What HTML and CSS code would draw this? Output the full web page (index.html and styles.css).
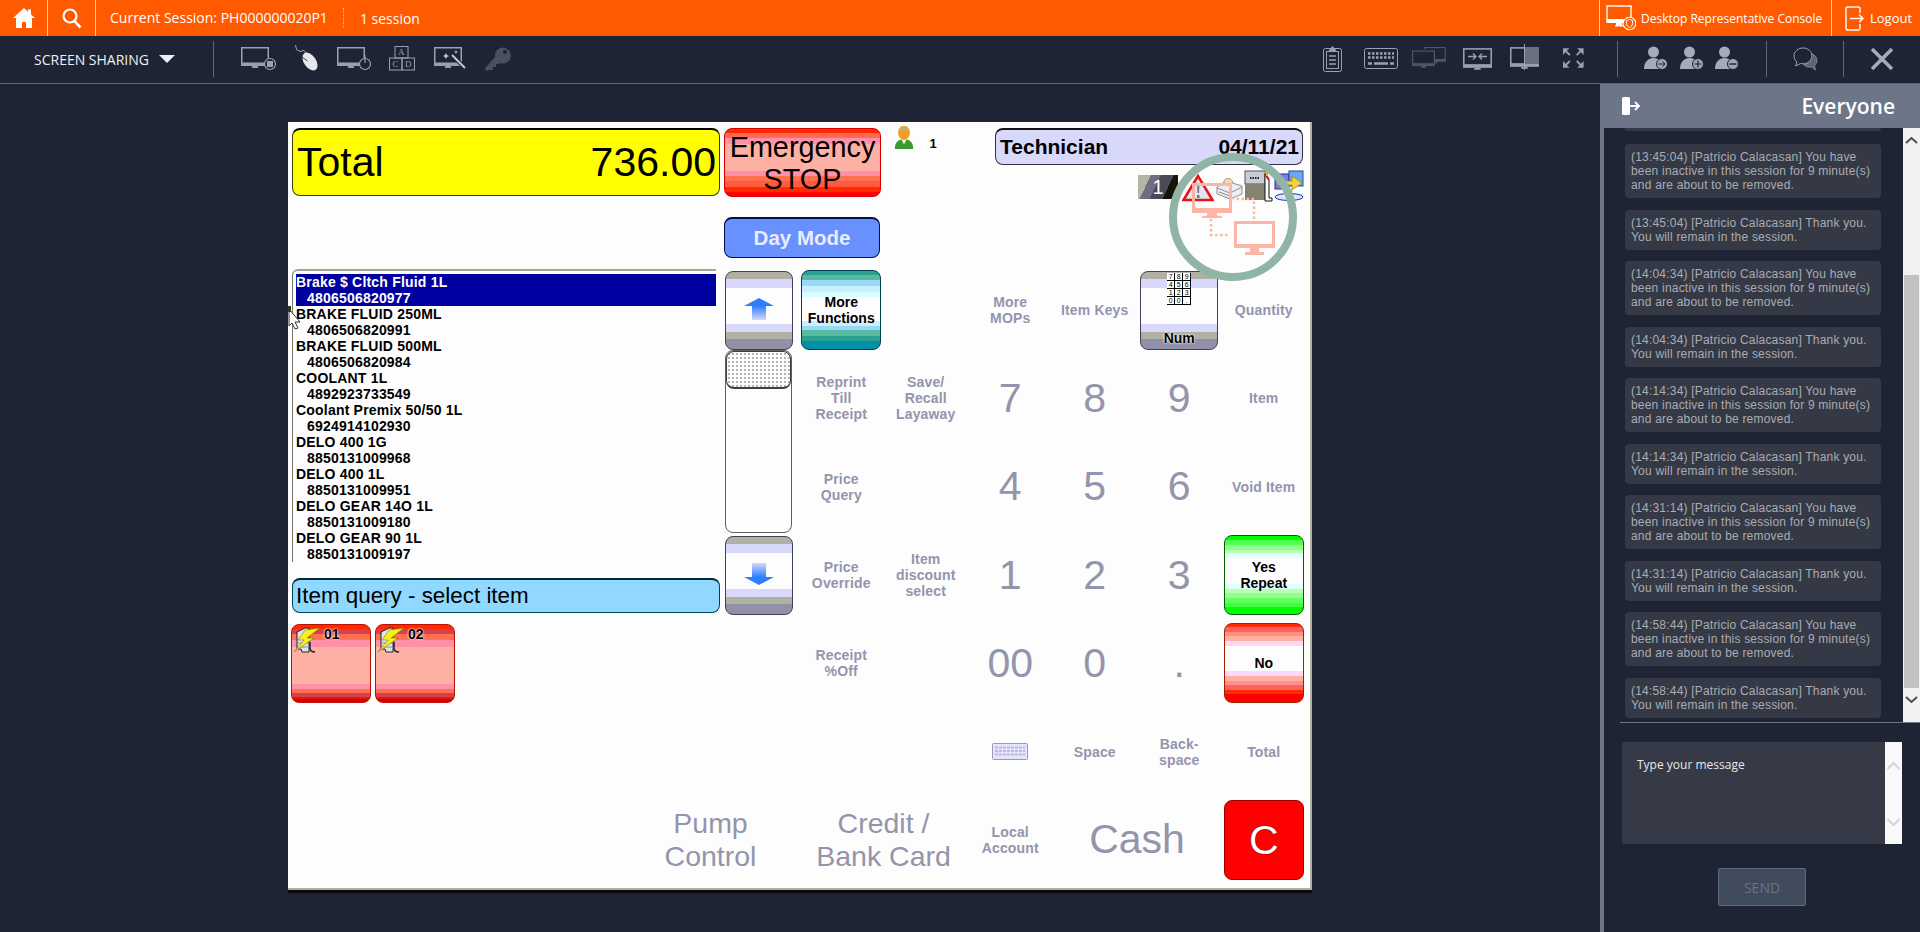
FILE: index.html
```html
<!DOCTYPE html>
<html lang="en">

<head>
  <meta charset="UTF-8" />
  <title>Desktop Representative Console</title>
  <link rel="stylesheet" href="styles.css">
</head>

<body>
  <svg class="defs" width="0" height="0">
    <defs>
      <symbol id="monitor" viewBox="0 0 28 22">
        <rect x="0.75" y="0.75" width="26.5" height="17" fill="none" stroke="currentColor" stroke-width="1.5" />
        <rect x="0" y="15.5" width="28" height="3.5" fill="currentColor" />
        <path d="M11.5 19h5l1 2h-7z" fill="currentColor" />
      </symbol>
      <symbol id="pump" viewBox="0 0 27 27">
        <path d="M4 6 12 2h4v24H9l-1-3H4z" fill="#dfe3ee" stroke="#222" />
        <path d="M4 17h12M4 21h12" stroke="#8a8fa3" />
        <path d="M22 26c-3 0-5-1-5-4v-6" fill="none" stroke="#222" stroke-width="1.500" />
        <path d="M27 2 12 4 5 14h6L1 26l20-14h-7z" fill="#f7ee20" stroke="#6a6400" stroke-width="0.500" />
      </symbol>
      <linearGradient id="shaftUp" x1="0" y1="0" x2="0" y2="1">
        <stop offset="0" stop-color="#2f7dff" />
        <stop offset="1" stop-color="#d8d8fa" />
      </linearGradient>
      <linearGradient id="shaftDown" x1="0" y1="1" x2="0" y2="0">
        <stop offset="0" stop-color="#2f7dff" />
        <stop offset="1" stop-color="#d8d8fa" />
      </linearGradient>
    </defs>
  </svg>

  <header class="topbar">
    <a class="top-btn home">
      <svg width="22" height="20" viewBox="0 0 22 20"><path d="M11 0 0 10h3v10h6v-6h4v6h6V10h3l-4-3.6V1.5h-3v2.2z" fill="#fff" /></svg>
    </a>
    <a class="top-btn search">
      <svg width="20" height="21" viewBox="0 0 20 21"><circle cx="8" cy="8" r="6.5" fill="none" stroke="#fff" stroke-width="2.2" /><path d="m12.5 13 6 6.5" stroke="#fff" stroke-width="2.6" /></svg>
    </a>
    <span class="session">Current Session: PH000000020P1</span>
    <span class="session-count">1 session</span>
    <a class="top-link console">
      <svg width="30" height="26" viewBox="0 0 30 26"><rect x="1" y="1" width="24" height="15" fill="none" stroke="#fff" stroke-width="1.4" /><rect x="0.5" y="14" width="25" height="4" fill="#fff" /><path d="M10 18h6v2h2v1.5h-9V20h1z" fill="#fff" /><circle cx="23.5" cy="18.5" r="6.2" fill="#ff5a00" stroke="#fff" stroke-width="1.1" /><path d="M23.5 14.5l3 1v3c0 2-1.4 3.3-3 4-1.6-.7-3-2-3-4v-3z" fill="none" stroke="#fff" stroke-width="1" /></svg>
      Desktop Representative Console
    </a>
    <a class="top-link logout">
      <svg width="19" height="25" viewBox="0 0 19 25"><path d="M15 7V2.5A1.5 1.5 0 0 0 13.500 1h-11A1.500 1.500 0 0 0 1 2.500v20A1.500 1.500 0 0 0 2.500 24h11a1.500 1.500 0 0 0 1.500-1.500V18" fill="none" stroke="#fff" stroke-width="1.4" /><path d="M5 12.500h13M14 8.500l4 4-4 4" fill="none" stroke="#fff" stroke-width="1.4" /></svg>
      Logout
    </a>
  </header>

  <nav class="toolbar">
    <div class="share-menu">SCREEN SHARING <span class="caret"></span></div>
    <div class="tool-group left-tools">
      <svg class="t54" height="36" viewBox="0 0 54 36"><use href="#monitor" x="0" y="6" width="28" height="22" /><circle cx="29" cy="23" r="5.500" fill="#1e2433" stroke="currentColor" stroke-width="1.200" /><rect x="26" y="20" width="6" height="6" fill="currentColor" /></svg>
      <svg class="t42" height="36" viewBox="0 0 42 36"><path d="M0.500 4 1.500 8.500 5 10.500 9 9.500 11 12" fill="none" stroke="#c5c9d3" stroke-width="0.800" /><ellipse cx="15" cy="20.500" rx="6" ry="10" transform="rotate(-35 15 20.500)" fill="#e6e8ee" /><path d="m7 16 5.500 4" stroke="#1e2433" stroke-width="0.800" /></svg>
      <svg class="t52" height="36" viewBox="0 0 52 36"><use href="#monitor" x="0" y="6" width="28" height="22" /><circle cx="28" cy="23" r="5.500" fill="#1e2433" stroke="currentColor" stroke-width="1.200" /><path d="M28 14v8" stroke="currentColor" stroke-width="1.200" /></svg>
      <svg class="t45" height="36" viewBox="0 0 45 36">
        <g fill="none" stroke="currentColor"><rect x="6" y="5.500" width="13" height="11.500" /><rect x="0.500" y="17" width="12.500" height="12" /><rect x="13" y="17" width="12.500" height="12" /></g>
        <g class="blocks" fill="currentColor"><text x="9" y="14">A</text><text x="3.500" y="26">C</text><text x="16" y="26">D</text></g>
      </svg>
      <svg class="t50" height="36" viewBox="0 0 50 36"><use href="#monitor" x="0" y="6" width="28" height="22" /><path d="m17 13 14 14" stroke="#1e2433" stroke-width="4" /><path d="m18 14 13 13" stroke="#c5c9d3" stroke-width="2" /><path d="M12 12l1 2 2 1-2 1-1 2-1-2-2-1 2-1zM22 9l.6 1.400 1.400.6-1.400.6-.6 1.400-.6-1.400-1.400-.6 1.400-.6z" fill="#c5c9d3" /></svg>
      <svg class="t27" height="36" viewBox="0 0 27 36"><g fill="#4a5060"><path d="M11 16a8 8 0 1 1 5 6l-1 1h-3v3h-3v3H5l-3 1-1-3z" /></g><circle cx="21" cy="11" r="2" fill="#1e2433" /></svg>
    </div>
    <div class="tool-group right-tools">
      <svg class="t41" height="36" viewBox="0 0 41 36"><rect x="0.500" y="7.500" width="18" height="23" rx="2" fill="none" stroke="currentColor" /><path d="M9.500 5 13 9v2H6V9z" fill="currentColor" /><rect x="3.500" y="10.500" width="12" height="17" fill="none" stroke="currentColor" /><path d="M6 15h7M6 19h7M6 23h7" stroke="currentColor" stroke-width="1.500" /></svg>
      <svg class="t48" height="36" viewBox="0 0 48 36"><rect x="0.500" y="7.500" width="33" height="20" rx="2" fill="none" stroke="currentColor" /><path d="M4 12.500h26M4 16.500h26" stroke="currentColor" stroke-width="2.400" stroke-dasharray="2.500 1.500" /><path d="M4 22.500h4M10 22.500h14M26 22.500h4" stroke="currentColor" stroke-width="2.400" /></svg>
      <svg class="t51 dim" height="36" viewBox="0 0 51 36"><use href="#monitor" x="12" y="6" width="22" height="17" /><rect x="0" y="8" width="23" height="18" fill="#1e2433" /><use href="#monitor" x="0" y="9" width="23" height="19" /></svg>
      <svg class="t47" height="36" viewBox="0 0 47 36"><use href="#monitor" x="0" y="7" width="29" height="23" /><path d="M5 15.500h8M10 12.500l3 3-3 3M24 15.500h-8M19 12.500l-3 3 3 3" fill="none" stroke="currentColor" stroke-width="1.300" /></svg>
      <svg class="t52" height="36" viewBox="0 0 52 36"><use href="#monitor" x="0" y="6" width="29" height="23" /><rect x="14.500" y="6" width="14.500" height="17" fill="#6a7080" /><path d="M14.500 3v26" stroke="currentColor" /></svg>
      <svg class="t55" height="36" viewBox="0 0 56 36"><path d="M1 7h6.500L1 14zM22 7h-6.500L22 14zM1 27h6.500L1 20zM22 27h-6.500L22 20z" fill="currentColor" /><path d="m3 9 5 5M20 9l-5 5M3 25l5-5M20 25l-5-5" stroke="currentColor" stroke-width="2" /></svg>
      <span class="tool-sep"></span>
      <span class="t26"></span>
      <svg class="t36 light" height="36" viewBox="0 0 36 36"><circle cx="9.500" cy="11" r="5.500" fill="currentColor" /><path d="M0 28c0-7 4-11 9.500-11s9.500 4 9.500 11z" fill="currentColor" /><circle cx="18" cy="23" r="5.500" fill="#9fa5b3" stroke="#1e2433" /><path d="M14.500 23h6.500M18.500 20.500l2.500 2.500-2.500 2.500" fill="none" stroke="#1e2433" /></svg>
      <svg class="t35 light" height="36" viewBox="0 0 35 36"><circle cx="9.500" cy="11" r="5.500" fill="currentColor" /><path d="M0 28c0-7 4-11 9.500-11s9.500 4 9.500 11z" fill="currentColor" /><circle cx="18" cy="23" r="5.500" fill="#9fa5b3" stroke="#1e2433" /><path d="M14.500 23h7M18 19.500v7" stroke="#1e2433" stroke-width="1.200" /></svg>
      <svg class="t51 light" height="36" viewBox="0 0 51 36"><circle cx="9.500" cy="11" r="5.500" fill="currentColor" /><path d="M0 28c0-7 4-11 9.500-11s9.500 4 9.500 11z" fill="currentColor" /><circle cx="18" cy="23" r="5.500" fill="#9fa5b3" stroke="#1e2433" /><path d="M14.500 23h7" stroke="#1e2433" stroke-width="1.400" /></svg>
      <span class="tool-sep"></span>
      <span class="t26"></span>
      <svg class="t50" height="36" viewBox="0 0 50 36"><path d="M10 7c-5 0-9 3.500-9 8 0 2.500 1.200 4.500 3 6l-1.500 4 5-2.500c.8.200 1.600.3 2.500.3 5 0 9-3.500 9-8s-4-7.800-9-7.800z" fill="none" stroke="currentColor" /><path d="M19 13c3 1 5 3.500 5 6.500 0 2-1 4-2.500 5l1 4.500-4-3c-3 .5-6-.5-8-2.500 5 0 8-3 8.500-10.500z" fill="#5d6373" stroke="currentColor" stroke-width="0.700" /></svg>
      <span class="tool-sep"></span>
      <span class="t27"></span>
      <svg class="t22 light" height="36" viewBox="0 0 22 36"><path d="m1 8 20 20M21 8 1 28" stroke="currentColor" stroke-width="3.600" /></svg>
    </div>
  </nav>

  <div class="main">
    <section class="stage">
      <div class="pos">
        <div class="total"><span>Total</span><span>736.00</span></div>
        <div class="btn-emergency">Emergency<br>STOP</div>
        <div class="attendant">
          <svg width="22" height="26" viewBox="0 0 19 24"><path d="M1 23c0-6 3-9 8.500-9s8.500 3 8.500 9z" fill="#3c9a32" /><path d="M7 14h5l-2.500 5z" fill="#e9f3de" /><ellipse cx="9.500" cy="8" rx="5.500" ry="6.500" fill="#f59a22" /><path d="M4.500 6c0-4 10-4 10 0" fill="#c9b06a" /></svg>
          <b>1</b>
        </div>
        <div class="status-block">
          <div class="till"><span>Technician</span><span>04/11/21</span></div>
          <div class="status-icons">
            <span class="badge">1</span>
            <svg width="32" height="28" viewBox="0 0 32 28"><path d="M16 2 1.500 26h29z" fill="#dfe6f3" stroke="#ee1111" stroke-width="2.500" /><path d="M15 10h2.500l-.5 9h-1.500zM15 21h2.500v3H15z" fill="#777" /></svg>
            <svg width="30" height="28" viewBox="0 0 30 28"><path d="M3 13 12 7l16 5v8l-12 5-13-5z" fill="#eceef2" stroke="#8d8f96" /><path d="M3 14l13 5 12-6M5 18l11 4" fill="none" stroke="#8d8f96" /><path d="M10 8c0-5 9-5 9 2" fill="#f1d8b0" stroke="#b59a70" /></svg>
            <svg width="29" height="33" viewBox="0 0 29 33"><rect x="1" y="2" width="20" height="13" fill="#c8ccd4" stroke="#555" /><path d="M6 9h10" stroke="#222" stroke-width="2" stroke-dasharray="1.500 1" /><rect x="1" y="15" width="20" height="16" fill="#83836f" /><path d="M21 5l2 1v2l2 3v18h3v3h-7z" fill="#fff" stroke="#111" /><path d="M22 6l3 5" stroke="#d81010" stroke-width="2" /><path d="M23 1v6" stroke="#e6b800" stroke-width="2" /></svg>
            <svg width="32" height="32" viewBox="0 0 32 32"><ellipse cx="16" cy="27" rx="14" ry="3.500" fill="#d9e6ff" stroke="#1b35a8" /><path d="M14 20h5v9h-5z" fill="#777" /><rect x="2" y="4" width="14" height="15" fill="#7a7ff0" stroke="#2a2a9a" /><rect x="16" y="1" width="14" height="15" fill="#6aa8f0" stroke="#2a4a9a" /><path d="M4 11h15V6l10 7-10 7v-5H4z" fill="#f4d23a" stroke="#97801a" stroke-width="0.700" /></svg>
          </div>
        </div>
        <div class="btn-day">Day Mode</div>

        <div class="left-stack">
          <ul class="item-list">
            <li class="selected">Brake $ Cltch Fluid 1L<span>4806506820977</span></li>
            <li>BRAKE FLUID 250ML<span>4806506820991</span></li>
            <li>BRAKE FLUID 500ML<span>4806506820984</span></li>
            <li>COOLANT 1L<span>4892923733549</span></li>
            <li>Coolant Premix 50/50 1L<span>6924914102930</span></li>
            <li>DELO 400 1G<span>8850131009968</span></li>
            <li>DELO 400 1L<span>8850131009951</span></li>
            <li>DELO GEAR 14O 1L<span>8850131009180</span></li>
            <li>DELO GEAR 90 1L<span>8850131009197</span></li>
          </ul>
          <div class="prompt">Item query - select item</div>
        </div>

        <div class="scroller">
          <div class="btn-gray">
            <svg class="arrow" width="30" height="22" viewBox="0 0 30 22"><path d="M8 8h14v14H8z" fill="url(#shaftUp)" /><path d="M15 0l15 8H0z" fill="#2f7dff" /></svg>
          </div>
          <div class="scroll-track"><div class="scroll-thumb"></div></div>
          <div class="btn-gray">
            <svg class="arrow" width="30" height="22" viewBox="0 0 30 22"><path d="M8 0h14v14H8z" fill="url(#shaftDown)" /><path d="M15 22 0 14h30z" fill="#2f7dff" /></svg>
          </div>
        </div>

        <div class="pumps">
          <div class="btn-pump">
            <svg width="27" height="27"><use href="#pump" /></svg>
            <b>01</b>
          </div>
          <div class="btn-pump">
            <svg width="27" height="27"><use href="#pump" /></svg>
            <b>02</b>
          </div>
        </div>

        <div class="pump-control">Pump<br>Control</div>

        <div class="keypad">
          <div class="key"><div class="btn-teal">More<br>Functions</div></div>
          <div class="key"></div>
          <div class="key label">More<br>MOPs</div>
          <div class="key label">Item Keys</div>
          <div class="key">
            <div class="btn-gray btn-num">
              <div class="mini-keys">
                <i>7</i><i>8</i><i>9</i><i>4</i><i>5</i><i>6</i><i>1</i><i>2</i><i>3</i><i>0</i><i>0</i><i>.</i>
              </div>
              <b>Num</b>
            </div>
          </div>
          <div class="key label">Quantity</div>

          <div class="key label">Reprint<br>Till<br>Receipt</div>
          <div class="key label">Save/<br>Recall<br>Layaway</div>
          <div class="key digit">7</div>
          <div class="key digit">8</div>
          <div class="key digit">9</div>
          <div class="key label">Item</div>

          <div class="key label">Price<br>Query</div>
          <div class="key"></div>
          <div class="key digit">4</div>
          <div class="key digit">5</div>
          <div class="key digit">6</div>
          <div class="key label">Void Item</div>

          <div class="key label">Price<br>Override</div>
          <div class="key label">Item<br>discount<br>select</div>
          <div class="key digit">1</div>
          <div class="key digit">2</div>
          <div class="key digit">3</div>
          <div class="key"><div class="btn-yes">Yes<br>Repeat</div></div>

          <div class="key label">Receipt<br>%Off</div>
          <div class="key"></div>
          <div class="key digit">00</div>
          <div class="key digit">0</div>
          <div class="key digit">.</div>
          <div class="key"><div class="btn-no">No</div></div>

          <div class="key"></div>
          <div class="key"></div>
          <div class="key">
            <svg width="36" height="17" viewBox="0 0 36 17"><rect x="0.500" y="0.500" width="35" height="16" rx="1" fill="#e4e4fb" stroke="#9a9ab8" /><path d="M3 4.500h30M3 8h30M3 11.500h30" stroke="#b9b9e0" stroke-width="2" stroke-dasharray="3 1" /></svg>
          </div>
          <div class="key label">Space</div>
          <div class="key label">Back-<br>space</div>
          <div class="key label">Total</div>

          <div class="key wide big">Credit /<br>Bank Card</div>
          <div class="key label">Local<br>Account</div>
          <div class="key wide digit">Cash</div>
          <div class="key"><div class="btn-clear">C</div></div>
        </div>

        <svg class="ring" width="136" height="136" viewBox="0 0 136 136">
          <circle cx="68" cy="68" r="60" fill="none" stroke="#90b4a6" stroke-width="8" />
          <g fill="#fdb6a6">
            <path d="M27 34h40v30H52v3h5v2H37v-2h5v-3H27zm3 3v22h34V37z" fill-rule="evenodd" />
            <path d="M69 72h41v27H94v4h5v3H80v-3h5v-4H69zm3 3v20h35V75z" fill-rule="evenodd" />
          </g>
          <path d="M46 70v16h18M89 70V50H68" fill="none" stroke="#fdb6a6" stroke-width="2.500" stroke-dasharray="2.500 2.500" />
        </svg>

        <svg class="cursor" width="13" height="26" viewBox="0 0 13 26"><path d="M1 3v17l3-3 3 6 3-1-3-6h5z" fill="#fff" stroke="#333" /><rect x="0" y="0" width="3" height="6" fill="#333" /></svg>
      </div>
    </section>

    <aside class="chat">
      <div class="chat-head">
        <svg width="18" height="18" viewBox="0 0 18 18"><rect x="0" y="0" width="8" height="18" rx="1.500" fill="#fff" /><path d="M8 9h9M13 5l4 4-4 4" fill="none" stroke="#fff" stroke-width="1.800" /></svg>
        <span>Everyone</span>
      </div>
      <div class="chat-log">
        <div class="chat-list">
          <div class="msg-cut"></div>
          <p class="msg">(13:45:04) [Patricio Calacasan] You have been inactive in this session for 9 minute(s) and are about to be removed.</p>
          <p class="msg">(13:45:04) [Patricio Calacasan] Thank you. You will remain in the session.</p>
          <p class="msg">(14:04:34) [Patricio Calacasan] You have been inactive in this session for 9 minute(s) and are about to be removed.</p>
          <p class="msg">(14:04:34) [Patricio Calacasan] Thank you. You will remain in the session.</p>
          <p class="msg">(14:14:34) [Patricio Calacasan] You have been inactive in this session for 9 minute(s) and are about to be removed.</p>
          <p class="msg">(14:14:34) [Patricio Calacasan] Thank you. You will remain in the session.</p>
          <p class="msg">(14:31:14) [Patricio Calacasan] You have been inactive in this session for 9 minute(s) and are about to be removed.</p>
          <p class="msg">(14:31:14) [Patricio Calacasan] Thank you. You will remain in the session.</p>
          <p class="msg">(14:58:44) [Patricio Calacasan] You have been inactive in this session for 9 minute(s) and are about to be removed.</p>
          <p class="msg">(14:58:44) [Patricio Calacasan] Thank you. You will remain in the session.</p>
        </div>
        <div class="scrollbar">
          <svg width="17" height="24" viewBox="0 0 17 24"><path d="m3 15 5.500-5 5.500 5" fill="none" stroke="#505050" stroke-width="2" /></svg>
          <div class="scrollbar-thumb"></div>
          <svg width="17" height="34" viewBox="0 0 17 34"><path d="m3 9 5.500 5 5.500-5" fill="none" stroke="#505050" stroke-width="2" /></svg>
        </div>
      </div>
      <div class="compose">
        <div class="compose-text">Type your message</div>
        <div class="compose-bar">
          <svg width="17" height="18" viewBox="0 0 17 18"><path d="m2.500 13 6-6 6 6" fill="none" stroke="#d4d4d4" stroke-width="2" /></svg>
          <svg width="17" height="18" viewBox="0 0 17 18"><path d="m2.500 5 6 6 6-6" fill="none" stroke="#d4d4d4" stroke-width="2" /></svg>
        </div>
      </div>
      <button class="send" type="button">SEND</button>
    </aside>
  </div>
</body>

</html>
```

FILE: styles.css
```css
* {
  box-sizing: border-box;
}

html,
body {
  margin: 0;
  height: 932px;
  overflow: hidden;
}

body {
  font-family: "Open Sans", "Liberation Sans", sans-serif;
  background: #1e2433;
  color: #fff;
  display: flex;
  flex-direction: column;
}

.defs {
  position: absolute;
}

/* top orange bar */
.topbar {
  height: 36px;
  flex: none;
  background: #ff5a00;
  display: flex;
  align-items: center;
  font-size: 14px;
  white-space: nowrap;
}

.top-btn {
  height: 36px;
  display: flex;
  align-items: center;
  border-right: 1px solid #ffc9a8;
}

.home {
  width: 48px;
  padding-left: 13px;
}

.search {
  width: 48px;
  padding-left: 14px;
}

.session {
  margin-left: 14px;
  padding-right: 15px;
  border-right: 1px dotted #ffb98c;
  line-height: 20px;
}

.session-count {
  margin-left: 16px;
}

.top-link {
  height: 36px;
  display: flex;
  align-items: center;
  border-left: 1px solid #ffc9a8;
  font-size: 12px;
}

.console {
  margin-left: auto;
  width: 232px;
  padding-left: 6px;
  gap: 5px;
}

.logout {
  width: 89px;
  padding-left: 13px;
  gap: 6px;
  font-size: 13px;
}

/* toolbar */
.toolbar {
  height: 48px;
  flex: none;
  display: flex;
  align-items: center;
  padding-bottom: 1px;
  border-bottom: 1px solid #5f6675;
  color: #9aa0ae;
}

.share-menu {
  width: 214px;
  height: 36px;
  padding-left: 34px;
  border-right: 1px solid #5f6675;
  display: flex;
  align-items: center;
  color: #eef0f4;
  font-size: 14px;
}

.caret {
  margin-left: 10px;
  border-left: 8px solid transparent;
  border-right: 8px solid transparent;
  border-top: 8px solid #eef0f4;
}

.tool-group {
  display: flex;
  align-items: center;
}

.tool-group svg,
.tool-group span {
  flex: none;
}

.left-tools {
  margin-left: 27px;
}

.right-tools {
  margin-left: auto;
  padding-right: 27px;
}

.blocks {
  font-family: "Liberation Serif", serif;
  font-size: 9px;
}

.tool-sep {
  width: 1px;
  height: 36px;
  background: #5f6675;
}

.dim {
  color: #4f5563;
}

.light {
  color: #a5abb8;
}

.t22 { width: 22px; }
.t26 { width: 26px; }
.t27 { width: 27px; }
.t35 { width: 35px; }
.t36 { width: 36px; }
.t41 { width: 41px; }
.t42 { width: 42px; }
.t45 { width: 45px; }
.t47 { width: 47px; }
.t48 { width: 48px; }
.t50 { width: 50px; }
.t51 { width: 51px; }
.t52 { width: 52px; }
.t54 { width: 54px; }
.t55 { width: 55px; }

/* main area */
.main {
  flex: 1;
  display: flex;
  min-height: 0;
}

.stage {
  flex: 1;
  padding: 38px 0 0 288px;
}

/* POS screen */
.pos {
  position: relative;
  width: 1024px;
  height: 768px;
  background: #fdfdfd;
  border-right: 2px solid #b0b09e;
  border-bottom: 2px solid #b0b09e;
  box-shadow: 0 3px 0 #0a0a0a;
  padding: 6px 0 0 4px;
  display: grid;
  grid-template-columns: 432px 75px repeat(6, 84.5px);
  grid-template-rows: 89px 49px repeat(7, 88.300px);
  font-family: "Liberation Sans", Arial, sans-serif;
  color: #000;
}

.total {
  grid-column: 1;
  grid-row: 1;
  width: 428px;
  height: 68px;
  background: #ffff00;
  border: 1px solid #3e3e00;
  border-top: 2px solid #000;
  border-radius: 8px;
  padding: 0 3px 0 4px;
  display: flex;
  justify-content: space-between;
  align-items: center;
  font-size: 41px;
}

.btn-emergency {
  grid-column: 2 / span 2;
  grid-row: 1;
  width: 157px;
  height: 69px;
  border-radius: 8px;
  border: 1px solid #d80000;
  text-align: center;
  font-size: 28.800px;
  line-height: 32px;
  padding-top: 2px;
  background: linear-gradient(#ff2a00 0 4px, #ff6a50 4px 9px, #ff90a8 9px 15px, #ffb0a5 15px 42px, #ff90a8 42px 47px, #ff7050 47px 52px, #ff5a40 52px 58px, #ff2a00 58px 63px, #ff0000 63px);
}

.attendant {
  grid-column: 4;
  grid-row: 1;
  padding-left: 9px;
  margin-top: -4px;
  display: flex;
  gap: 15px;
  align-items: flex-start;
}

.attendant b {
  margin-top: 12px;
  font-size: 13px;
}

.status-block {
  grid-column: 5 / 9;
  grid-row: 1 / 3;
  margin-left: 27px;
  width: 308px;
}

.till {
  height: 37px;
  background: #d8d8fa;
  border: 1px solid #303040;
  border-top: 2px solid #111;
  border-radius: 8px;
  padding: 0 3px 0 4px;
  display: flex;
  justify-content: space-between;
  align-items: center;
  font-size: 21px;
  font-weight: bold;
}

.status-icons {
  margin-top: 5px;
  margin-right: -2px;
  height: 32px;
  display: flex;
  justify-content: flex-end;
  align-items: flex-end;
}

.badge {
  width: 40px;
  height: 24px;
  margin-right: 4px;
  margin-bottom: 3px;
  color: #fff;
  font-size: 20px;
  line-height: 24px;
  text-align: center;
  background: linear-gradient(115deg, #b5b5a6 0 25%, #6e6e80 25% 45%, #4a4a55 45% 70%, #14140a 70%);
}

.btn-day {
  grid-column: 2 / span 2;
  grid-row: 2;
  width: 156px;
  height: 41px;
  background: #6890ff;
  border: 1px solid #001048;
  border-top: 2px solid #001048;
  border-radius: 8px;
  color: #e8ecff;
  font-size: 20.500px;
  font-weight: bold;
  text-align: center;
  line-height: 37px;
}

.left-stack {
  grid-column: 1;
  grid-row: 3 / span 4;
  padding-top: 3px;
}

.item-list {
  list-style: none;
  margin: 0;
  width: 424px;
  height: 293px;
  padding: 3px 0 0 3px;
  border-top: 2px solid #a5a594;
  border-left: 1px solid #77776a;
  border-radius: 6px 0 0 0;
  font-size: 14px;
  font-weight: bold;
  line-height: 16px;
  letter-spacing: 0.200px;
}

.item-list span {
  display: block;
  padding-left: 11px;
}

.item-list .selected {
  background: #0000a0;
  color: #fff;
}

.prompt {
  width: 428px;
  height: 35px;
  margin-top: 16px;
  padding-left: 3px;
  background: #90d8ff;
  border: 1px solid #004050;
  border-top: 2px solid #002a38;
  border-radius: 8px;
  font-size: 22.400px;
  line-height: 31px;
}

.scroller {
  grid-column: 2;
  grid-row: 3 / span 4;
  padding: 5px 0 0 1px;
  width: 69px;
  display: flex;
  flex-direction: column;
}

.btn-gray {
  width: 68px;
  height: 79px;
  flex: none;
  border: 1px solid #404058;
  border-radius: 8px;
  display: flex;
  align-items: center;
  justify-content: center;
  background: linear-gradient(#b0b0a4 0 7px, #d8d8fa 7px 16px, #fdfdfd 16px 52px, #d8d8fa 52px 60px, #b0b0a4 60px 67px, #9090a8 67px);
}

.arrow {
  margin-bottom: 3px;
}

.scroll-track {
  height: 183px;
  width: 67px;
  flex: none;
  border: 1px solid #606050;
  border-radius: 8px;
  margin-bottom: 3px;
}

.scroll-thumb {
  height: 38px;
  border: 1px solid #404040;
  border-bottom-width: 2px;
  border-radius: 8px;
  background: radial-gradient(circle, #6a6a6a 0.500px, transparent 0.900px) 0 0 / 4px 4px #fbfbfb;
}

.pumps {
  grid-column: 1;
  grid-row: 7;
  margin-left: -1px;
  display: flex;
  align-items: center;
  gap: 4px;
}

.btn-pump {
  width: 80px;
  height: 79px;
  border: 1px solid #c01000;
  border-radius: 8px;
  padding: 1px 0 0 1px;
  display: flex;
  align-items: flex-start;
  gap: 4px;
  background: linear-gradient(#ff2a00 0 4px, #d84050 4px 9px, #ff7050 9px 15px, #ff90a8 15px 22px, #ffb0a5 22px 59px, #ff90a8 59px 64px, #ff7050 64px 68px, #d84050 68px 72px, #d82000 72px 74px, #d80000 74px);
}

.btn-pump b {
  font-size: 14px;
  line-height: 16px;
  text-shadow: 0 0 2px #fff, 0 0 2px #fff;
}

.pump-control {
  grid-column: 1 / 3;
  grid-row: 9;
  padding: 1px 0 0 330px;
  align-self: center;
  text-align: center;
  color: #9494ac;
  font-size: 28.500px;
  line-height: 33px;
}

/* keys on the right */
.keypad {
  grid-column: 3 / 9;
  grid-row: 3 / 10;
  display: grid;
  grid-template-columns: repeat(6, 84.500px);
  grid-template-rows: repeat(7, 88.300px);
}

.key {
  display: flex;
  align-items: center;
  justify-content: center;
  text-align: center;
  color: #9494ac;
}

.label {
  font-size: 14px;
  font-weight: bold;
  line-height: 16px;
  letter-spacing: 0.150px;
}

.digit {
  font-size: 41px;
}

.wide {
  grid-column: span 2;
}

.big {
  font-size: 28.500px;
  line-height: 33px;
  padding-top: 1px;
}

.btn-teal,
.btn-yes,
.btn-no,
.btn-clear {
  width: 80px;
  height: 80px;
  border-radius: 8px;
  display: flex;
  align-items: center;
  justify-content: center;
  text-align: center;
  color: #000;
  font-size: 14px;
  font-weight: bold;
  line-height: 16px;
}

.btn-teal {
  border: 1px solid #004050;
  background: linear-gradient(#2aa090 0 4px, #58b8a0 4px 9px, #98d8f8 9px 15px, #c8f0ff 15px 21px, #d8ffff 21px 26px, #fdfdfd 26px 50px, #c8f0ff 50px 55px, #98d8f8 55px 59px, #58b8a0 59px 65px, #2aa090 65px 70px, #0090a8 70px);
}

.btn-yes {
  border: 1px solid #006000;
  background: linear-gradient(#00ff00 0 4px, #50ff50 4px 9px, #90ff90 9px 14px, #b8ffb0 14px 17px, #e0ffff 17px 22px, #fdfdfd 22px 48px, #e0ffff 48px 53px, #b8ffb0 53px 57px, #90ff90 57px 62px, #60ff60 62px 67px, #40ff40 67px 71px, #00ff00 71px);
}

.btn-no {
  border: 1px solid #a02000;
  background: linear-gradient(#ff2a00 0 3px, #ff6060 3px 8px, #ff9080 8px 12px, #ffb0a0 12px 17px, #ffd8f8 17px 22px, #fdfdfd 22px 47px, #ffd8f8 47px 52px, #ffb0a0 52px 57px, #ff9090 57px 61px, #ff6060 61px 66px, #ff2a00 66px 70px, #ff0000 70px);
}

.btn-clear {
  background: #ff0000;
  border: 1px solid #a00000;
  color: #fff;
  font-size: 41px;
  font-weight: normal;
  text-shadow: 0 0 1px #000;
}

.btn-num {
  width: 78px;
  flex-direction: column;
  justify-content: flex-start;
  padding-top: 1px;
  color: #000;
}

.btn-num b {
  margin-top: 25px;
  font-size: 14px;
  line-height: 16px;
  text-shadow: 0 0 2px #fff, 0 0 2px #fff;
}

.mini-keys {
  width: 24px;
  display: grid;
  grid-template-columns: repeat(3, 8px);
  grid-auto-rows: 8px;
  background: #000;
}

.mini-keys i {
  background: #fff;
  margin: 0 1px 1px 0;
  color: #000;
  font-size: 7px;
  font-style: normal;
  line-height: 7px;
  text-align: center;
}

/* things on top of the POS screen */
.ring {
  position: absolute;
  left: 877px;
  top: 27px;
  pointer-events: none;
}

.cursor {
  position: absolute;
  left: 0;
  top: 184px;
}

/* chat panel */
.chat {
  width: 320px;
  flex: none;
  border-left: 4px solid #6d7689;
  display: flex;
  flex-direction: column;
}

.chat-head {
  height: 44px;
  flex: none;
  margin-left: -1px;
  background: #6d7689;
  padding: 0 25px 0 19px;
  display: flex;
  align-items: center;
  justify-content: space-between;
}

.chat-head span {
  font-size: 21px;
  font-weight: 600;
}

.chat-log {
  height: 595px;
  flex: none;
  margin-left: 16px;
  border-bottom: 1px solid #6d7689;
  display: flex;
}

.chat-list {
  width: 283px;
  padding-left: 5px;
  overflow: hidden;
  font-family: "Liberation Sans", Arial, sans-serif;
}

.msg-cut {
  width: 256px;
  height: 3px;
  margin-bottom: 13px;
  background: #353945;
  border-radius: 0 0 4px 4px;
}

.msg {
  width: 256px;
  margin: 0 0 11.500px;
  padding: 6px 6px;
  background: #353945;
  border-radius: 4px;
  color: #aaacb3;
  font-size: 12px;
  line-height: 14px;
  letter-spacing: 0.200px;
}

.scrollbar {
  width: 17px;
  background: #f1f1f1;
  display: flex;
  flex-direction: column;
  justify-content: space-between;
}

.scrollbar-thumb {
  flex: 1;
  margin: 123px 1px 0;
  background: #c1c1c1;
}

.compose {
  height: 102px;
  flex: none;
  margin: 19px 0 0 18px;
  width: 280px;
  display: flex;
}

.compose-text {
  flex: 1;
  padding: 15px;
  background: #363a46;
  border-radius: 2px 0 0 2px;
  font-size: 12px;
  line-height: 16px;
  color: #e8e8ea;
}

.compose-bar {
  width: 17px;
  background: #f9f9f9;
  display: flex;
  flex-direction: column;
  justify-content: space-between;
  padding: 14px 0 12px;
}

.send {
  width: 88px;
  height: 38px;
  margin: 24px 0 0 114px;
  background: #404b5c;
  border: 1px solid #5f6b7e;
  border-radius: 2px;
  color: #687284;
  font-family: "Open Sans", sans-serif;
  font-size: 14px;
}
```
